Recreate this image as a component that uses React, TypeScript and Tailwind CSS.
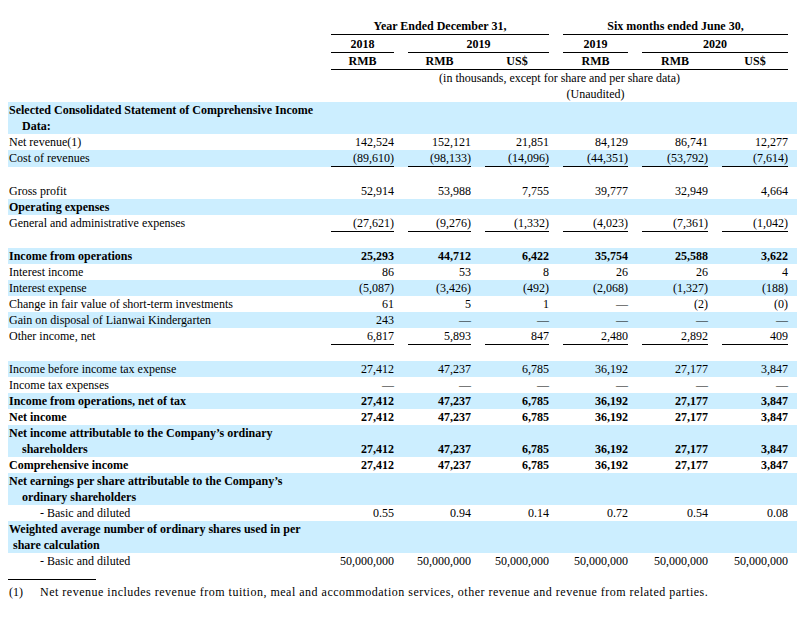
import React from 'react';

type Row = {
    label?: string;
    label2?: string;
    indent2?: string;
    values?: string[];
    bold?: boolean;
    boldValues?: boolean;
    blue?: boolean;
    underline?: boolean;
    sub?: boolean;
    blank?: boolean;
};

const DASH = '—';

const rows: Row[] = [
    { label: 'Selected Consolidated Statement of Comprehensive Income', label2: 'Data:', indent2: 'pl-[13px]', bold: true, blue: true },
    { label: 'Net revenue(1)', values: ['142,524', '152,121', '21,851', '84,129', '86,741', '12,277'] },
    { label: 'Cost of revenues', values: ['(89,610)', '(98,133)', '(14,096)', '(44,351)', '(53,792)', '(7,614)'], blue: true, underline: true },
    { blank: true },
    { label: 'Gross profit', values: ['52,914', '53,988', '7,755', '39,777', '32,949', '4,664'] },
    { label: 'Operating expenses', bold: true, blue: true },
    { label: 'General and administrative expenses', values: ['(27,621)', '(9,276)', '(1,332)', '(4,023)', '(7,361)', '(1,042)'], underline: true },
    { blank: true },
    { label: 'Income from operations', values: ['25,293', '44,712', '6,422', '35,754', '25,588', '3,622'], bold: true, boldValues: true, blue: true },
    { label: 'Interest income', values: ['86', '53', '8', '26', '26', '4'] },
    { label: 'Interest expense', values: ['(5,087)', '(3,426)', '(492)', '(2,068)', '(1,327)', '(188)'], blue: true },
    { label: 'Change in fair value of short-term investments', values: ['61', '5', '1', DASH, '(2)', '(0)'] },
    { label: 'Gain on disposal of Lianwai Kindergarten', values: ['243', DASH, DASH, DASH, DASH, DASH], blue: true },
    { label: 'Other income, net', values: ['6,817', '5,893', '847', '2,480', '2,892', '409'], underline: true },
    { blank: true },
    { label: 'Income before income tax expense', values: ['27,412', '47,237', '6,785', '36,192', '27,177', '3,847'], blue: true },
    { label: 'Income tax expenses', values: [DASH, DASH, DASH, DASH, DASH, DASH] },
    { label: 'Income from operations, net of tax', values: ['27,412', '47,237', '6,785', '36,192', '27,177', '3,847'], bold: true, boldValues: true, blue: true },
    { label: 'Net income', values: ['27,412', '47,237', '6,785', '36,192', '27,177', '3,847'], bold: true, boldValues: true },
    { label: 'Net income attributable to the Company’s ordinary', label2: 'shareholders', indent2: 'pl-[13px]', values: ['27,412', '47,237', '6,785', '36,192', '27,177', '3,847'], bold: true, boldValues: true, blue: true },
    { label: 'Comprehensive income', values: ['27,412', '47,237', '6,785', '36,192', '27,177', '3,847'], bold: true, boldValues: true },
    { label: 'Net earnings per share attributable to the Company’s', label2: 'ordinary shareholders', indent2: 'pl-[13px]', bold: true, blue: true },
    { label: '- Basic and diluted', sub: true, values: ['0.55', '0.94', '0.14', '0.72', '0.54', '0.08'] },
    { label: 'Weighted average number of ordinary shares used in per', label2: 'share calculation', indent2: 'pl-[4px]', bold: true, blue: true },
    { label: '- Basic and diluted', sub: true, values: ['50,000,000', '50,000,000', '50,000,000', '50,000,000', '50,000,000', '50,000,000'] },
];

const grid = 'grid grid-cols-[309px_63px_63px_64px_65px_66px_66px] gap-x-[14px] pr-[9px] w-[789px] ml-2';

function TableRow({ row }: { row: Row }) {
    if (row.blank) return <div className="h-4 ml-2 w-[789px]" />;
    return (
        <div className={`${grid} ${row.blue ? 'bg-[#cceeff]' : ''}`}>
            <div className={`whitespace-nowrap ${row.bold ? 'font-bold' : ''} ${row.sub ? 'pl-[32px]' : 'pl-px'}`}>
                <div>{row.label}</div>
                {row.label2 && <div className={row.indent2}>{row.label2}</div>}
            </div>
            {row.values?.map((v, i) => (
                <div
                    key={i}
                    className={`self-end text-right whitespace-nowrap ${row.boldValues ? 'font-bold' : ''} ${row.underline ? 'border-b border-black' : ''}`}
                >
                    {v}
                </div>
            ))}
        </div>
    );
}

export default function App() {
    return (
        <div className="w-[808px] h-[618px] bg-white text-black text-[12px] leading-4 pt-[18px] font-['Liberation_Serif','Times_New_Roman',serif]">
            {/* column headers */}
            <div className={`${grid} font-bold`}>
                <div className="col-start-2 col-span-3 text-center border-b border-black">Year Ended December 31,</div>
                <div className="col-start-5 col-span-3 text-center border-b border-black">Six months ended June 30,</div>
            </div>
            <div className={`${grid} font-bold mt-px`}>
                <div className="col-start-2 text-center border-b border-black">2018</div>
                <div className="col-start-3 col-span-2 text-center border-b border-black">2019</div>
                <div className="col-start-5 text-center border-b border-black">2019</div>
                <div className="col-start-6 col-span-2 text-center border-b border-black">2020</div>
            </div>
            <div className={`${grid} font-bold`}>
                <div className="col-start-2 col-span-6 grid grid-cols-subgrid border-b border-black">
                    <div className="text-center">RMB</div>
                    <div className="text-center">RMB</div>
                    <div className="text-center">US$</div>
                    <div className="text-center">RMB</div>
                    <div className="text-center">RMB</div>
                    <div className="text-center">US$</div>
                </div>
            </div>
            <div className={grid}>
                <div className="col-start-2 col-span-6 text-center">(in thousands, except for share and per share data)</div>
            </div>
            <div className={grid}>
                <div className="col-start-5 text-center whitespace-nowrap">(Unaudited)</div>
            </div>

            {rows.map((r, i) => (
                <TableRow key={i} row={r} />
            ))}

            {/* footnote */}
            <div className="ml-2 mt-[10px] w-[88px] border-t border-black" />
            <div className="flex ml-[9px] mt-1 whitespace-nowrap">
                <span className="w-[31px]">(1)</span>
                <span className="tracking-[0.5px]">Net revenue includes revenue from tuition, meal and accommodation services, other revenue and revenue from related parties.</span>
            </div>
        </div>
    );
}
